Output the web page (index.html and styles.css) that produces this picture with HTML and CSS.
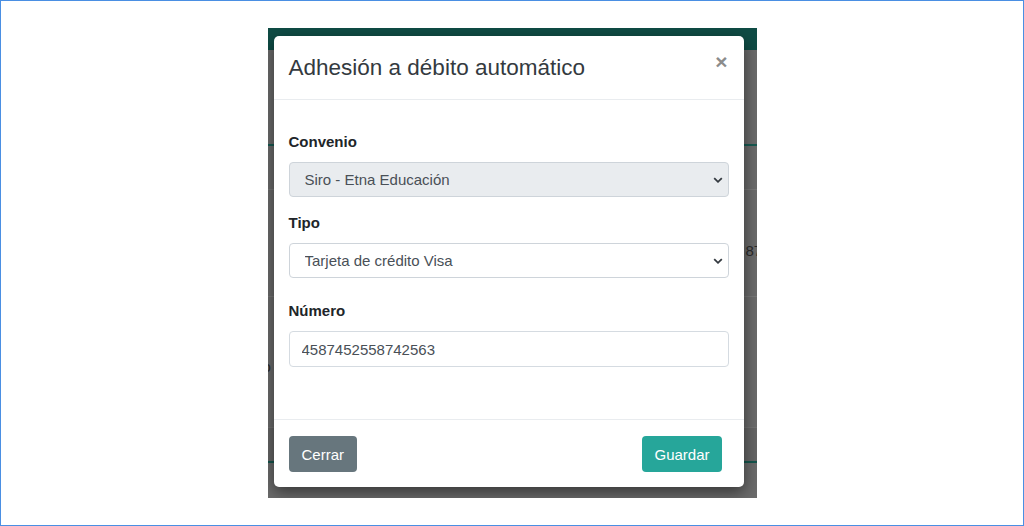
FILE: index.html
```html
<!DOCTYPE html>
<html lang="es">
<head>
    <meta charset="UTF-8">
    <meta name="viewport" content="width=device-width, initial-scale=1.0">
    <title>Adhesión a débito automático</title>
    <link rel="stylesheet" href="styles.css">
</head>
<body>
    <div class="frame">
        <div class="shot">
            <!-- Página de fondo, oscurecida por el backdrop -->
            <div class="page">
                <div class="page-bar"></div>
                <div class="page-head"></div>
                <div class="page-row row-a"></div>
                <div class="page-row row-b"><span class="cell-num">87</span></div>
                <div class="page-row row-c"><span class="cell-cut">o</span></div>
                <div class="page-row row-d"></div>
                <div class="page-rest"></div>
            </div>

            <div class="modal">
                <div class="modal-header">
                    <h5 class="modal-title">Adhesión a débito automático</h5>
                    <button class="close" type="button">×</button>
                </div>
                <div class="modal-body">
                    <div class="form-group">
                        <label for="convenio">Convenio</label>
                        <div class="select-wrap">
                            <select id="convenio" class="form-control" disabled>
                                <option>Siro - Etna Educación</option>
                            </select>
                            <svg class="chevron" width="10" height="6" viewBox="0 0 10 6"><path d="M1.2 1.2 L5 4.8 L8.8 1.2" fill="none" stroke="#343a40" stroke-width="1.8"/></svg>
                        </div>
                    </div>
                    <div class="form-group group-wide">
                        <label for="tipo">Tipo</label>
                        <div class="select-wrap">
                            <select id="tipo" class="form-control">
                                <option>Tarjeta de crédito Visa</option>
                            </select>
                            <svg class="chevron" width="10" height="6" viewBox="0 0 10 6"><path d="M1.2 1.2 L5 4.8 L8.8 1.2" fill="none" stroke="#343a40" stroke-width="1.8"/></svg>
                        </div>
                    </div>
                    <div class="form-group group-last">
                        <label for="numero">Número</label>
                        <input type="text" id="numero" class="form-control input" value="4587452558742563">
                    </div>
                </div>
                <div class="modal-footer">
                    <button class="btn btn-secondary" type="button">Cerrar</button>
                    <button class="btn btn-primary" type="button">Guardar</button>
                </div>
            </div>
        </div>
    </div>
</body>
</html>
```

FILE: styles.css
```css
* {
    box-sizing: border-box;
}
body {
    margin: 0;
    font-family: "Liberation Sans", Arial, sans-serif;
    background: #fff;
}
.frame {
    height: 526px;
    border: 1px solid #4a8fe3;
    display: flex;
    justify-content: center;
    align-items: center;
}
.shot {
    position: relative;
    width: 489px;
    height: 470px;
    overflow: hidden;
    background: #6b6b6b;
}

/* fondo */
.page-bar {
    height: 22px;
    background: #0f4c45;
}
.page-head {
    height: 96px;
    border-bottom: 2px solid #175a52;
}
.page-row {
    border-bottom: 1px solid #787878;
    font-size: 15px;
    color: #2a2a2a;
    display: flex;
    align-items: center;
}
.row-a {
    height: 44px;
}
.row-b {
    height: 107px;
}
.row-c {
    height: 131px;
    border-bottom-color: #737373;
}
.row-d {
    height: 35px;
    background: #656565;
    border-bottom: 2px solid #14554d;
}
.cell-num {
    margin-left: 478px;
    margin-top: 14px;
}
.cell-cut {
    margin-left: -5px;
    margin-top: 8px;
}

/* modal */
.modal {
    position: absolute;
    left: 6px;
    top: 8px;
    width: 470px;
    background: #fff;
    border-radius: 5px;
    box-shadow: 0 5px 15px rgba(0, 0, 0, 0.5);
}
.modal-header {
    display: flex;
    justify-content: space-between;
    align-items: center;
    padding: 15px;
    border-bottom: 1px solid #e9ecef;
}
.modal-title {
    margin: 0;
    font-size: 22.5px;
    line-height: 33px;
    font-weight: normal;
    color: #343a40;
}
.close {
    padding: 0;
    border: none;
    background: none;
    font-family: "Liberation Sans", Arial, sans-serif;
    font-size: 21px;
    font-weight: bold;
    line-height: 1;
    color: #8c8c8c;
    margin-top: -12px;
    margin-right: 1px;
}
.modal-body {
    padding: 31px 15px 30px;
}
.form-group {
    margin-bottom: 15px;
}
.group-wide {
    margin-bottom: 22px;
}
.group-last {
    margin-bottom: 22px;
}
.form-group label {
    display: block;
    font-size: 15px;
    font-weight: bold;
    line-height: 22px;
    margin-bottom: 9px;
    color: #212529;
}
.select-wrap {
    position: relative;
}
.form-control {
    display: block;
    width: 100%;
    height: 35px;
    padding: 0 30px 0 15px;
    font-family: "Liberation Sans", Arial, sans-serif;
    font-size: 15px;
    color: #495057;
    background: #fff;
    border: 1px solid #ced4da;
    border-radius: 4px;
    appearance: none;
    -webkit-appearance: none;
    opacity: 1;
}
.form-control:disabled {
    background: #e9ecef;
    color: #495057;
}
.input {
    height: 36px;
    padding: 0 12px;
    border-color: #d5dbe1;
}
.chevron {
    position: absolute;
    right: 6px;
    top: 15px;
}
.modal-footer {
    display: flex;
    justify-content: space-between;
    padding: 16px 22px 15px 15px;
    border-top: 1px solid #e9ecef;
}
.btn {
    height: 36px;
    padding: 0 12px;
    font-family: "Liberation Sans", Arial, sans-serif;
    font-size: 15px;
    color: #fff;
    border: 1px solid transparent;
    border-radius: 4px;
}
.btn-secondary {
    background: #67767d;
}
.btn-primary {
    padding: 0 11px;
    background: #26a69a;
}
```
